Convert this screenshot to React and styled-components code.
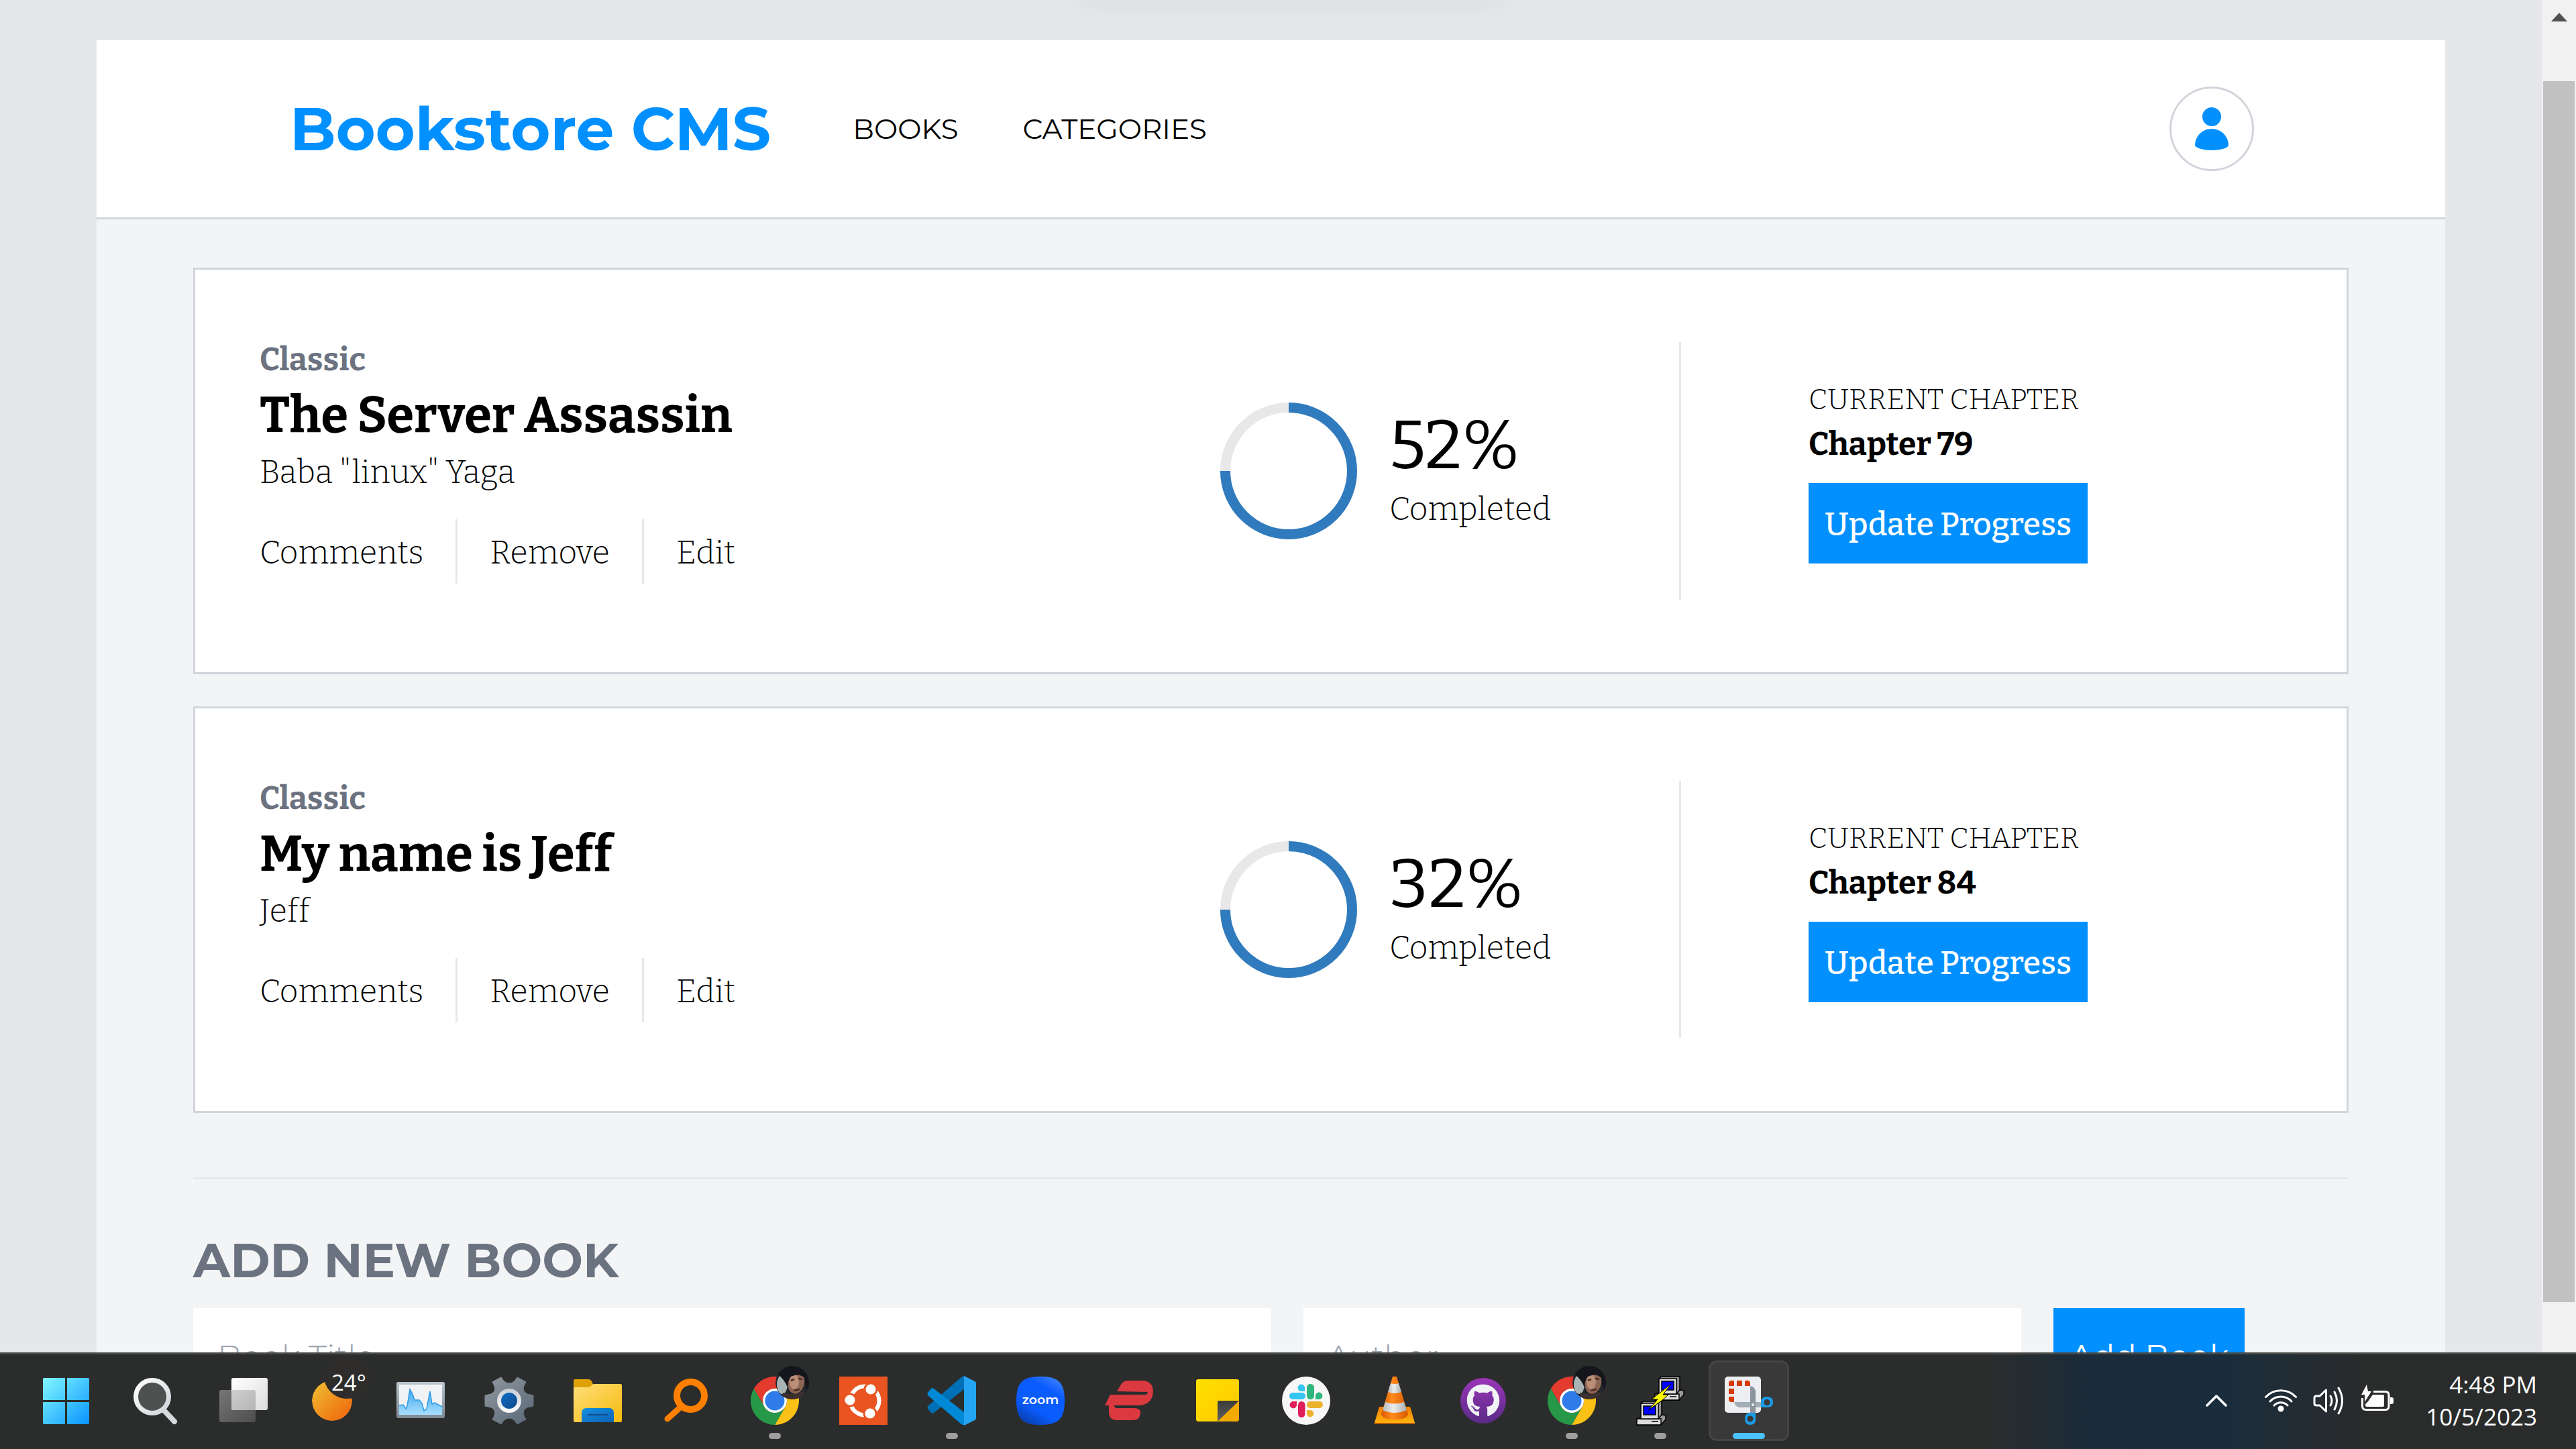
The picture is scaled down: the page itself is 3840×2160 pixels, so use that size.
import React from 'react';
import styled, { createGlobalStyle } from 'styled-components';
import { FaGithub } from 'react-icons/fa';

const sans = '"Montserrat", "Inter", "Open Sans", sans-serif';
const slab = '"Bitter", "Noto Serif", "DejaVu Serif", serif';
const system = '"Open Sans", "Noto Sans", sans-serif';

const colors = {
  azure: '#0290ff',
  ring: '#307bbe',
  line: '#e8e8e8',
  border: '#d1d5db',
  muted: '#6b7280',
};

const GlobalStyle = createGlobalStyle`
  *, *::before, *::after { box-sizing: border-box; }
  body { margin: 0; background: #e5e7eb; color: #000; }
  h1, h2, h3, p, ul { margin: 0; padding: 0; }
  button, input { font: inherit; border: 0; border-radius: 0; }
  button { cursor: pointer; }
`;

/* ---------- window ---------- */

const Desktop = styled.div`
  display: flex;
  flex-direction: column;
  height: 100vh;
  overflow: hidden;
`;

const Viewport = styled.div`
  display: flex;
  flex: 1;
  min-height: 0;
`;

const Page = styled.div`
  position: relative;
  flex: 1;
  min-width: 0;
  overflow: hidden;
  padding: 60px 144px 0;
  background: #e5e7eb;
`;

const PopupShadow = styled.div`
  position: absolute;
  top: -24px;
  left: 50%;
  width: 640px;
  height: 20px;
  margin-left: -290px;
  border-radius: 12px;
  box-shadow: 0 6px 40px rgba(0, 0, 0, 0.08);
`;

const ScrollTrack = styled.div`
  display: flex;
  flex-direction: column;
  align-items: center;
  width: 51px;
  background: #f1f1f1;
`;

const ScrollUp = styled.div`
  display: flex;
  align-items: center;
  justify-content: center;
  height: 51px;
  margin-bottom: 70px;

  &::before {
    content: '';
    border: 12px solid transparent;
    border-top: 0;
    border-bottom: 13px solid #505050;
  }
`;

const ScrollThumb = styled.div`
  flex: 1;
  width: 47px;
  margin-bottom: 75px;
  background: #c1c1c1;
`;

/* ---------- site ---------- */

const Site = styled.div`
  min-height: 100%;
  background: #f3f4f6;
`;

const Header = styled.header`
  display: flex;
  align-items: center;
  height: 267px;
  padding: 0 285px 0 288px;
  background: #fff;
  border-bottom: 3px solid ${colors.border};
`;

const Logo = styled.h1`
  font: 700 90px/108px ${sans};
  color: ${colors.azure};
`;

const Nav = styled.nav`
  display: flex;
  gap: 96px;
  flex: 1;
  margin-left: 122px;
`;

const NavLink = styled.a`
  font: 400 42px/60px ${sans};
  color: #000;
  text-decoration: none;
`;

const Profile = styled.button`
  display: flex;
  align-items: center;
  justify-content: center;
  width: 126px;
  height: 126px;
  padding: 0;
  background: #fff;
  border: 3px solid ${colors.border};
  border-radius: 50%;
`;

const Main = styled.main`
  padding: 72px 144px;
`;

const BookList = styled.ul`
  display: flex;
  flex-direction: column;
  gap: 48px;
  list-style: none;
`;

const Card = styled.li`
  display: grid;
  grid-template-columns: minmax(0, 1fr) 687px 992px;
  align-items: center;
  padding: 96px 0 96px 96px;
  background: #fff;
  border: 3px solid ${colors.border};
  font-variant-ligatures: none;
`;

const Details = styled.div`
  padding-top: 2px;
`;

const Category = styled.p`
  font: 700 48px/72px ${slab};
  font-variant-ligatures: inherit;
  color: ${colors.muted};
`;

const Title = styled.h2`
  font: 700 74px/96px ${slab};
  font-variant-ligatures: none;
`;

const Author = styled.p`
  font: 300 48px/72px ${slab};
  font-variant-ligatures: none;
`;

const Actions = styled.div`
  display: flex;
  margin: 34px 0 36px;
`;

const Action = styled.button`
  height: 96px;
  padding: 4px 48px 0;
  font: 300 48px/72px ${slab};
  color: #000;
  background: none;
  border-right: 3px solid ${colors.line};

  &:first-child { padding-left: 0; }
  &:last-child { border-right: 0; }
`;

const Progress = styled.div`
  display: flex;
  align-items: center;
  height: 384px;
  border-right: 3px solid ${colors.line};
`;

const ProgressInner = styled.div`
  display: flex;
  align-items: flex-start;
  gap: 48px;
`;

const ProgressText = styled.div`
  padding-top: 4px;
`;

const Percent = styled.p`
  font: 400 102px/120px ${slab};
`;

const Completed = styled.p`
  font: 300 48px/70px ${slab};
`;

const Chapter = styled.div`
  padding: 2px 0 0 190px;
`;

const ChapterLabel = styled.p`
  font: 300 43px/60px ${slab};
`;

const ChapterName = styled.p`
  font: 700 48px/72px ${slab};
`;

const UpdateButton = styled.button`
  height: 120px;
  margin-top: 22px;
  padding: 4px 24px 0;
  font: 500 48px/72px ${slab};
  color: #fff;
  background: ${colors.azure};
`;

const Divider = styled.hr`
  height: 3px;
  margin: 96px 0 72px;
  border: 0;
  background: #e5e7eb;
`;

const FormTitle = styled.h2`
  margin-bottom: 24px;
  font: 700 72px/96px ${sans};
  color: ${colors.muted};
`;

const Form = styled.form`
  display: flex;
  gap: 48px;
`;

const Field = styled.input`
  flex: none;
  width: ${(p) => p.$width};
  height: 144px;
  padding: 0 36px;
  font: 300 48px/72px ${sans};
  background: #fff;

  &::placeholder { color: #9ca3af; opacity: 1; }
`;

const AddButton = styled.button`
  flex: none;
  height: 144px;
  padding: 0 24px;
  font: 400 48px/72px ${sans};
  color: #fff;
  background: ${colors.azure};
`;

/* ---------- taskbar ---------- */

const Taskbar = styled.footer`
  display: flex;
  align-items: center;
  justify-content: space-between;
  height: 144px;
  padding: 0 58px 3px 39px;
  border-top: 3px solid #484a48;
  background: linear-gradient(90deg, #2b2c2c 77%, #1b2c3a 81%, #192d3d 86%, #222c34 89%, #2a2b2b 92%);
`;

const Apps = styled.div`
  display: flex;
  gap: 12px;
`;

const AppButton = styled.button`
  position: relative;
  display: flex;
  align-items: center;
  justify-content: center;
  width: 120px;
  height: 120px;
  padding: 0;
  border-radius: 12px;
  background: ${(p) => (p.$active ? '#383938' : 'transparent')};
  border: 3px solid ${(p) => (p.$active ? '#444544' : 'transparent')};
`;

const Running = styled.span`
  position: absolute;
  bottom: 0;
  left: 50%;
  width: ${(p) => (p.$active ? 48 : 18)}px;
  height: 9px;
  border-radius: 5px;
  transform: translateX(-50%);
  background: ${(p) => (p.$active ? '#4cc2ff' : '#9d9e9d')};
`;

const Temperature = styled.span`
  position: absolute;
  top: 8px;
  left: 56px;
  font: 400 33px/44px ${system};
  color: #fff;
`;

const Tray = styled.div`
  display: flex;
  align-items: center;
  gap: 24px;
`;

const TrayButton = styled.button`
  display: flex;
  padding: 0;
  background: none;
  margin-right: ${(p) => p.$after || 0}px;
`;

const Clock = styled.time`
  margin-left: 24px;
  font: 400 35px/48px ${system};
  color: #fff;
  text-align: right;
`;

/* ---------- drawings ---------- */

const IconSvg = styled.svg`
  flex: none;
  overflow: visible;
`;

const Icon = ({ children }) => (
  <IconSvg width="96" height="96" viewBox="-48 -48 96 96" aria-hidden="true">{children}</IconSvg>
);

const Gradient = ({ id, from, to, x2 = 1, y2 = 1 }) => (
  <linearGradient id={id} x1="0" y1="0" x2={x2} y2={y2}>
    <stop offset="0" stopColor={from} />
    <stop offset="1" stopColor={to} />
  </linearGradient>
);

const ProgressRing = () => (
  <svg width="204" height="204" viewBox="0 0 204 204" fill="none" strokeWidth="15" aria-hidden="true">
    <circle cx="102" cy="102" r="94.5" stroke={colors.line} />
    <path d="M102 7.5A94.5 94.5 0 1 1 7.5 102" stroke={colors.ring} />
  </svg>
);

const PersonIcon = () => (
  <svg width="50" height="64" viewBox="0 0 50 64" fill={colors.azure} aria-hidden="true">
    <circle cx="25" cy="14" r="14" />
    <path d="M25 32C11 32 0 43 0 57C2 61 13 64 25 64S48 61 50 57C50 43 39 32 25 32Z" />
  </svg>
);

const StartIcon = () => (
  <Icon>
    <defs>
      <linearGradient id="start" gradientUnits="userSpaceOnUse" x1="-35" y1="-34" x2="35" y2="35">
        <stop offset="0" stopColor="#82f8ff" />
        <stop offset="0.5" stopColor="#45c6ff" />
        <stop offset="1" stopColor="#0693ff" />
      </linearGradient>
    </defs>
    <path fill="url(#start)" d="M-33-34H-2V-1H-35V-32Q-35-34-33-34ZM1-34H32Q34-34 34-32V-1H1ZM-35 2H-2V35H-33Q-35 35-35 33ZM1 2H34V33Q34 35 32 35H1Z" />
  </Icon>
);

const SearchIcon = () => (
  <Icon>
    <defs><Gradient id="lens" from="#ffffff" to="#cfd4d9" /></defs>
    <path d="M13 14L29 31" stroke="#d5d9dd" strokeWidth="8" strokeLinecap="round" />
    <circle cx="-4" cy="-6" r="24.5" fill="#4f5150" stroke="url(#lens)" strokeWidth="7" />
  </Icon>
);

const TaskViewIcon = () => (
  <Icon>
    <defs>
      <Gradient id="tvLight" from="#ffffff" to="#dcdcdc" />
      <Gradient id="tvDark" from="#767676" to="#4d4d4d" />
      <Gradient id="tvMid" from="#cfcfcf" to="#b4b4b4" />
    </defs>
    <rect x="-36" y="-16" width="54" height="48" rx="3" fill="url(#tvDark)" />
    <rect x="-18" y="-34" width="54" height="48" rx="3" fill="url(#tvLight)" />
    <rect x="-18" y="-16" width="36" height="30" rx="2" fill="url(#tvMid)" />
  </Icon>
);

const WeatherIcon = () => (
  <Icon>
    <defs>
      <Gradient id="moon" from="#efc233" to="#f0600a" />
      <mask id="crescent">
        <circle cx="0" cy="0" r="30" fill="#fff" />
        <circle cx="22" cy="-37" r="34" fill="#000" />
      </mask>
    </defs>
    <circle cx="22" cy="-34" r="34" fill="#33302c" opacity="0.35" />
    <circle cx="0" cy="0" r="30" fill="url(#moon)" mask="url(#crescent)" />
  </Icon>
);

const MonitorIcon = () => (
  <Icon>
    <defs>
      <Gradient id="frame" from="#b9c4cf" to="#7f8a95" x2={0} />
      <Gradient id="area" from="#3fa9ee" to="#a9deff" x2={0} />
    </defs>
    <rect x="-36" y="-28" width="72" height="54" rx="3" fill="url(#frame)" />
    <rect x="-32" y="-24" width="64" height="45" fill="#f1f2f4" />
    <path fill="url(#area)" d="M-32 7L-26 6L-22 12L-20 8L-16-17L-12-10L-9-1H-2L2 4L5 15L9 12L14-14L17 5L21 3L32 9V21H-32Z" />
    <path fill="none" stroke="#2f9be6" strokeWidth="1.5" d="M-32 7L-26 6L-22 12L-20 8L-16-17L-12-10L-9-1H-2L2 4L5 15L9 12L14-14L17 5L21 3L32 9" />
  </Icon>
);

const GearIcon = () => (
  <Icon>
    <defs>
      <linearGradient id="gear" gradientUnits="userSpaceOnUse" x1="-30" y1="-34" x2="30" y2="34">
        <stop offset="0" stopColor="#8e969e" />
        <stop offset="1" stopColor="#5a6978" />
      </linearGradient>
      <Gradient id="gearRing" from="#c9cdd2" to="#ffffff" x2={0} />
      <Gradient id="gearHub" from="#0f6fc5" to="#10488c" />
    </defs>
    <path
      fill="url(#gear)"
      d="M36-8V8L27 10Q19 14 22 22L25 28L12 35Q7 26 0 26T-12 35L-25 28L-22 22Q-19 14-27 10L-36 8V-8L-27-10Q-19-14-22-22L-25-28L-12-35Q-7-26 0-26T12-35L25-28L22-22Q19-14 27-10Z"
      stroke="url(#gear)"
      strokeWidth="1"
      strokeLinejoin="round"
    />
    <circle r="18" fill="url(#gearRing)" />
    <circle r="12" fill="url(#gearHub)" />
  </Icon>
);

const FolderIcon = () => (
  <Icon>
    <defs>
      <Gradient id="folder" from="#ffe07a" to="#f6b90e" />
      <Gradient id="folderDoc" from="#1592e0" to="#0b62b8" />
    </defs>
    <path fill="#dfa106" d="M-34-32H-14Q-10-32-8-27L-7-24V-10H-36V-30Q-36-32-34-32Z" />
    <path fill="url(#folder)" d="M-36-18Q-36-20-34-20H-15Q-11-20-9-23Q-8-25-5-25H34Q36-25 36-23V30Q36 32 34 32H-34Q-36 32-36 30Z" />
    <path fill="url(#folderDoc)" d="M-24 32V19Q-24 11-17 11H17Q24 11 24 19V32Z" />
    <path d="M-14 21H14" stroke="#14508f" strokeWidth="2.5" strokeLinecap="round" />
  </Icon>
);

const FinderIcon = () => (
  <Icon>
    <g fill="none" stroke="#ff8000">
      <circle cx="6.5" cy="-7.5" r="20.5" strokeWidth="10" />
      <path d="M-9 10L-28 27" strokeWidth="9" strokeLinecap="round" />
    </g>
  </Icon>
);

const ChromeIcon = ({ id }) => (
  <Icon>
    <defs>
      <clipPath id={id}><circle cx="26" cy="-27" r="25" /></clipPath>
    </defs>
    <path fill="#e33b2e" d="M-31.2-18A36 36 0 0 1 31.2-18H0A18 18 0 0 0-15.6 9Z" />
    <path fill="#fbc116" d="M31.2-18A36 36 0 0 1 0 36L15.6 9A18 18 0 0 0 0-18Z" />
    <path fill="#279847" d="M0 36A36 36 0 0 1-31.2-18L-15.6 9A18 18 0 0 0 15.6 9Z" />
    <circle r="18" fill="#fff" />
    <circle r="14.5" fill="#2f7bea" />
    <g clipPath={`url(#${id})`}>
      <circle cx="26" cy="-27" r="25" fill="#22252b" />
      <ellipse cx="11" cy="-24" rx="8" ry="14" fill="#a9b5b4" />
      <path fill="#3c312e" d="M12-12L28-9L44-14L40 0H12Z" />
      <ellipse cx="32" cy="-27" rx="12" ry="17" fill="#8d6552" transform="rotate(14 32 -27)" />
      <ellipse cx="29" cy="-28" rx="7" ry="11" fill="#bb8f77" />
      <path fill="#14161c" d="M4-40Q20-58 40-50Q54-42 50-14Q45-22 44-34Q36-42 24-36Q19-30 19-20Q14-32 4-40Z" />
      <path d="M24-30L29-32M35-33L41-32M28-15L37-17" stroke="#4a2f27" strokeWidth="2.5" />
    </g>
  </Icon>
);

const UbuntuIcon = () => (
  <Icon>
    <rect x="-36" y="-36" width="72" height="72" fill="#e95420" />
    <circle cx="2" cy="0" r="21.5" fill="none" stroke="#fff" strokeWidth="6" />
    {[[-20, -1], [11, -17], [10, 19]].map(([x, y]) => (
      <g key={x}>
        <circle cx={x} cy={y} r="10.5" fill="#e95420" />
        <circle cx={x} cy={y} r="7.6" fill="#fff" />
      </g>
    ))}
  </Icon>
);

const CodeIcon = () => (
  <Icon>
    <path fill="#0070b6" d="M-36 12L-31 18Q-29 20-27 18L18-17V-36L14-35L-36 8Q-37 10-36 12Z" />
    <path fill="#0089d6" d="M-36-12L-31-18Q-29-20-27-18L18 17V36L14 35L-36-8Q-37-10-36-12Z" />
    <path fill="#24a5f3" d="M16-36Q18-37 20-36L34-29Q36-28 36-26V26Q36 28 34 29L20 36Q18 37 15 35Q18 36 18 32V-32Q18-36 16-36Z" />
  </Icon>
);

const ZoomText = styled.text`
  font: 600 19px ${sans};
  fill: #fff;
  text-anchor: middle;
`;

const ZoomIcon = () => (
  <Icon>
    <defs>
      <linearGradient id="zoomBg" x1="1" y1="0" x2="0.4" y2="1">
        <stop offset="0" stopColor="#4f8dff" />
        <stop offset="0.35" stopColor="#0b5cff" />
        <stop offset="0.75" stopColor="#0b5cff" />
        <stop offset="1" stopColor="#0845bf" />
      </linearGradient>
    </defs>
    <path fill="url(#zoomBg)" d="M0-36C27-36 36-27 36 0S27 36 0 36S-36 27-36 0S-27-36 0-36Z" />
    <ZoomText x="0" y="5">zoom</ZoomText>
  </Icon>
);

const VpnIcon = () => (
  <Icon>
    <path
      fill="#da3940"
      d="M-18-14L-12-24Q-9-30-1-30H18Q36-30 36-13Q34 7 13 7H-22Q-22 11-18 11H7Q18 11 17 19Q16 29 6 29H-18Q-30 29-30 17V7H-36L-28-9H24Q27-9 28-13Z"
    />
  </Icon>
);

const NotesIcon = () => (
  <Icon>
    <defs>
      <Gradient id="note" from="#ffe000" to="#ffc800" />
      <Gradient id="noteFold" from="#3a3a3a" to="#606060" x2={0} />
    </defs>
    <path fill="url(#note)" d="M-30-32H30L32-30V0L1 31H-30L-32 29V-30Z" />
    <path fill="#f2a900" d="M32 0V29L30 31H0Z" />
    <path fill="url(#noteFold)" d="M0 31V2Q0 0 2 0H32Z" />
  </Icon>
);

const SlackIcon = () => (
  <Icon>
    <circle r="36" fill="#f7f7f7" />
    <g fill="#36c5f0">
      <rect x="-25" y="-12" width="24" height="10" rx="5" />
      <path d="M-2-14H-7A5.2 5.2 0 1 1-2-19.5Z" />
    </g>
    <g fill="#2eb67d">
      <rect x="1" y="-25" width="11" height="23" rx="5.2" />
      <path d="M14-2V-7A5.2 5.2 0 1 1 19.5-2Z" />
    </g>
    <g fill="#ecb22e">
      <rect x="1" y="1" width="24" height="10" rx="5" />
      <path d="M1 14H6.5A5.2 5.2 0 1 1 1 19.5Z" />
    </g>
    <g fill="#e01e5a">
      <rect x="-12" y="1" width="10.5" height="24" rx="5.2" />
      <path d="M-14 1V6.5A5.2 5.2 0 1 1-19.5 1Z" />
    </g>
  </Icon>
);

const ConeIcon = () => (
  <Icon>
    <defs>
      <Gradient id="coneBase" from="#f57f00" to="#ffb70f" x2={0} />
      <linearGradient id="cone" x1="0" x2="1">
        <stop offset="0" stopColor="#d65a00" />
        <stop offset="0.4" stopColor="#ff8a1c" />
        <stop offset="1" stopColor="#d65a00" />
      </linearGradient>
      <linearGradient id="stripe" x1="0" x2="1">
        <stop offset="0" stopColor="#b5b9bb" />
        <stop offset="0.45" stopColor="#eceeee" />
        <stop offset="1" stopColor="#a8acae" />
      </linearGradient>
    </defs>
    <path fill="url(#coneBase)" d="M-23 9H23L30 33Q31 35 28 35H-28Q-31 35-30 33Z" />
    <path fill="#b85600" d="M-30 33H30V34Q30 35 28 35H-28Q-30 35-30 34Z" />
    <path fill="url(#cone)" d="M-3-36H3L20 20Q18 28 0 28T-20 20Z" />
    <path fill="url(#stripe)" d="M-6-26Q0-24 6-26L10-13Q0-9-10-13Z" />
    <path fill="url(#stripe)" d="M-14 2Q0 7 14 2L18 14Q0 22-18 14Z" />
  </Icon>
);

const GithubIcon = () => (
  <Icon>
    <defs><Gradient id="gh" from="#9a36b8" to="#5a2a86" x2={0} /></defs>
    <circle r="34" fill="url(#gh)" />
    <FaGithub x={-25} y={-25} size={50} color="#f1f2f6" />
  </Icon>
);

const Computer = ({ x, y }) => (
  <g transform={`translate(${x} ${y})`} stroke="#000" strokeWidth="1.5">
    <path fill="#9a9a9a" d="M6 24L12 20H38L43 21V27L36 35H0V26Z" />
    <path fill="#dcdcdc" d="M0 26H36V35H0Z" />
    <path fill="#8c8c8c" d="M7 2L10 0H37V20L32 26H7Z" />
    <path fill="#dcdcdc" d="M6 3H32V26H6Z" />
    <rect x="10" y="7" width="18" height="13" fill="#0000ff" />
    <path d="M22 30H32" />
  </g>
);

const PuttyIcon = () => (
  <Icon>
    <Computer x={-8} y={-36} />
    <Computer x={-35} y={1} />
    <path fill="#ffff00" stroke="#000" strokeWidth="1" d="M16-25L4-9H12L2 0L-18 14L-4-2H-13Z" />
  </Icon>
);

const SnipIcon = () => (
  <Icon>
    <rect x="-36" y="-36" width="54" height="54" rx="5" fill="#eceef1" />
    <g fill="#d83b01">
      <path d="M-30-22V-26Q-30-30-26-30H-22V-22ZM-18-30H-10V-22H-18ZM-6-30H-2Q2-30 2-26V-22H-6Z" />
      <path d="M-30-18H-22V-10H-30ZM-30-6H-22V2H-26Q-30 2-30-2Z" />
    </g>
    <path fill="#a3adb5" d="M-22 2H18V10H-13Q-20 10-22 2Z" />
    <path fill="#8b959d" d="M2-22Q10-20 10-13V18H2Z" />
    <circle cx="6" cy="6" r="2" fill="#eef0f2" />
    <path
      fill="#1c9be6"
      fillRule="evenodd"
      d="M18 10V2Q18-6 27-6Q36-6 36 2T28 10ZM27-2A4.5 4.5 0 1 0 27.1-2ZM10 18H2Q-6 18-6 27Q-6 36 2 36T10 28ZM2 22.5A4.5 4.5 0 1 0 2.1 22.5Z"
    />
  </Icon>
);

const ChevronIcon = () => (
  <svg width="32" height="20" viewBox="0 0 32 20" fill="none" stroke="#fff" strokeWidth="3.5" strokeLinecap="round" strokeLinejoin="round" aria-hidden="true">
    <path d="M2 17L16 3L30 17" />
  </svg>
);

const WifiIcon = () => (
  <svg width="48" height="48" viewBox="0 0 48 48" fill="none" stroke="#fff" strokeWidth="3" strokeLinecap="round" aria-hidden="true">
    <path d="M1.5 18.5A31 31 0 0 1 46.5 18.5M8 25A22 22 0 0 1 40 25M14 31A14 14 0 0 1 34 31" />
    <circle cx="24" cy="36" r="4.5" fill="#fff" stroke="none" />
  </svg>
);

const SoundIcon = () => (
  <svg width="48" height="48" viewBox="0 0 48 48" fill="none" stroke="#fff" strokeWidth="3" strokeLinecap="round" strokeLinejoin="round" aria-hidden="true">
    <path d="M2 20Q2 17 5 17H10L19.5 8V40L10 31H5Q2 31 2 28Z" />
    <path d="M26 17Q30 24 26 31M32 11Q39 24 32 37M38 5Q49 24 38 43" />
  </svg>
);

const BatteryIcon = () => (
  <svg width="48" height="48" viewBox="0 0 48 48" aria-hidden="true">
    <path d="M18 8.500H36Q41 8.500 41 14V30Q41 35.500 36 35.500H7Q1.500 35.500 1.500 30V18" transform="translate(0 2)" fill="none" stroke="#fff" strokeWidth="3" />
    <path fill="#fff" d="M43 19H45Q48 19 48 22V26Q48 29 45 29H43ZM17 15H32Q34 15 34 17V31Q34 33 32 33H8Q6 33 6 31V29L10 25ZM8 0L0 15H5V26L15 10H10Z" />
  </svg>
);

/* ---------- data ---------- */

const books = [
  { category: 'Classic', title: 'The Server Assassin', author: 'Baba "linux" Yaga', percent: 52, chapter: 79 },
  { category: 'Classic', title: 'My name is Jeff', author: 'Jeff', percent: 32, chapter: 84 },
];

const apps = [
  { name: 'Start', icon: <StartIcon /> },
  { name: 'Search', icon: <SearchIcon /> },
  { name: 'Task view', icon: <TaskViewIcon /> },
  { name: 'Weather', icon: <WeatherIcon />, label: '24°' },
  { name: 'Resource monitor', icon: <MonitorIcon /> },
  { name: 'Settings', icon: <GearIcon /> },
  { name: 'File explorer', icon: <FolderIcon /> },
  { name: 'Finder', icon: <FinderIcon /> },
  { name: 'Chrome', icon: <ChromeIcon id="userA" />, running: true },
  { name: 'Ubuntu', icon: <UbuntuIcon /> },
  { name: 'Code editor', icon: <CodeIcon />, running: true },
  { name: 'Zoom', icon: <ZoomIcon /> },
  { name: 'VPN', icon: <VpnIcon /> },
  { name: 'Sticky notes', icon: <NotesIcon /> },
  { name: 'Slack', icon: <SlackIcon /> },
  { name: 'Media player', icon: <ConeIcon /> },
  { name: 'GitHub', icon: <GithubIcon /> },
  { name: 'Chrome profile', icon: <ChromeIcon id="userB" />, running: true },
  { name: 'PuTTY', icon: <PuttyIcon />, running: true },
  { name: 'Snipping tool', icon: <SnipIcon />, running: true, active: true },
];

const Book = ({ category, title, author, percent, chapter }) => (
  <Card>
    <Details>
      <Category>{category}</Category>
      <Title>{title}</Title>
      <Author>{author}</Author>
      <Actions>
        <Action type="button">Comments</Action>
        <Action type="button">Remove</Action>
        <Action type="button">Edit</Action>
      </Actions>
    </Details>
    <Progress>
      <ProgressInner>
        <ProgressRing />
        <ProgressText>
          <Percent>{percent}%</Percent>
          <Completed>Completed</Completed>
        </ProgressText>
      </ProgressInner>
    </Progress>
    <Chapter>
      <ChapterLabel>CURRENT CHAPTER</ChapterLabel>
      <ChapterName>Chapter {chapter}</ChapterName>
      <UpdateButton type="button">Update Progress</UpdateButton>
    </Chapter>
  </Card>
);

export default function App() {
  return (
    <Desktop>
      <GlobalStyle />
      <Viewport>
        <Page>
          <PopupShadow />
          <Site>
            <Header>
              <Logo>Bookstore CMS</Logo>
              <Nav>
                <NavLink href="#books">BOOKS</NavLink>
                <NavLink href="#categories">CATEGORIES</NavLink>
              </Nav>
              <Profile type="button" aria-label="Profile"><PersonIcon /></Profile>
            </Header>
            <Main>
              <BookList>
                {books.map((book) => <Book key={book.title} {...book} />)}
              </BookList>
              <Divider />
              <FormTitle>ADD NEW BOOK</FormTitle>
              <Form onSubmit={(e) => e.preventDefault()}>
                <Field $width="50%" type="text" placeholder="Book Title" aria-label="Book Title" />
                <Field $width="33.333%" type="text" placeholder="Author" aria-label="Author" />
                <AddButton type="submit">Add Book</AddButton>
              </Form>
            </Main>
          </Site>
        </Page>
        <ScrollTrack>
          <ScrollUp />
          <ScrollThumb />
        </ScrollTrack>
      </Viewport>
      <Taskbar>
        <Apps>
          {apps.map(({ name, icon, label, running, active }) => (
            <AppButton key={name} type="button" aria-label={name} $active={active}>
              {icon}
              {label && <Temperature>{label}</Temperature>}
              {running && <Running $active={active} />}
            </AppButton>
          ))}
        </Apps>
        <Tray>
          <TrayButton type="button" aria-label="Show hidden icons" $after={32}><ChevronIcon /></TrayButton>
          <TrayButton type="button" aria-label="Network"><WifiIcon /></TrayButton>
          <TrayButton type="button" aria-label="Volume"><SoundIcon /></TrayButton>
          <TrayButton type="button" aria-label="Battery"><BatteryIcon /></TrayButton>
          <Clock>4:48 PM<br />10/5/2023</Clock>
        </Tray>
      </Taskbar>
    </Desktop>
  );
}
